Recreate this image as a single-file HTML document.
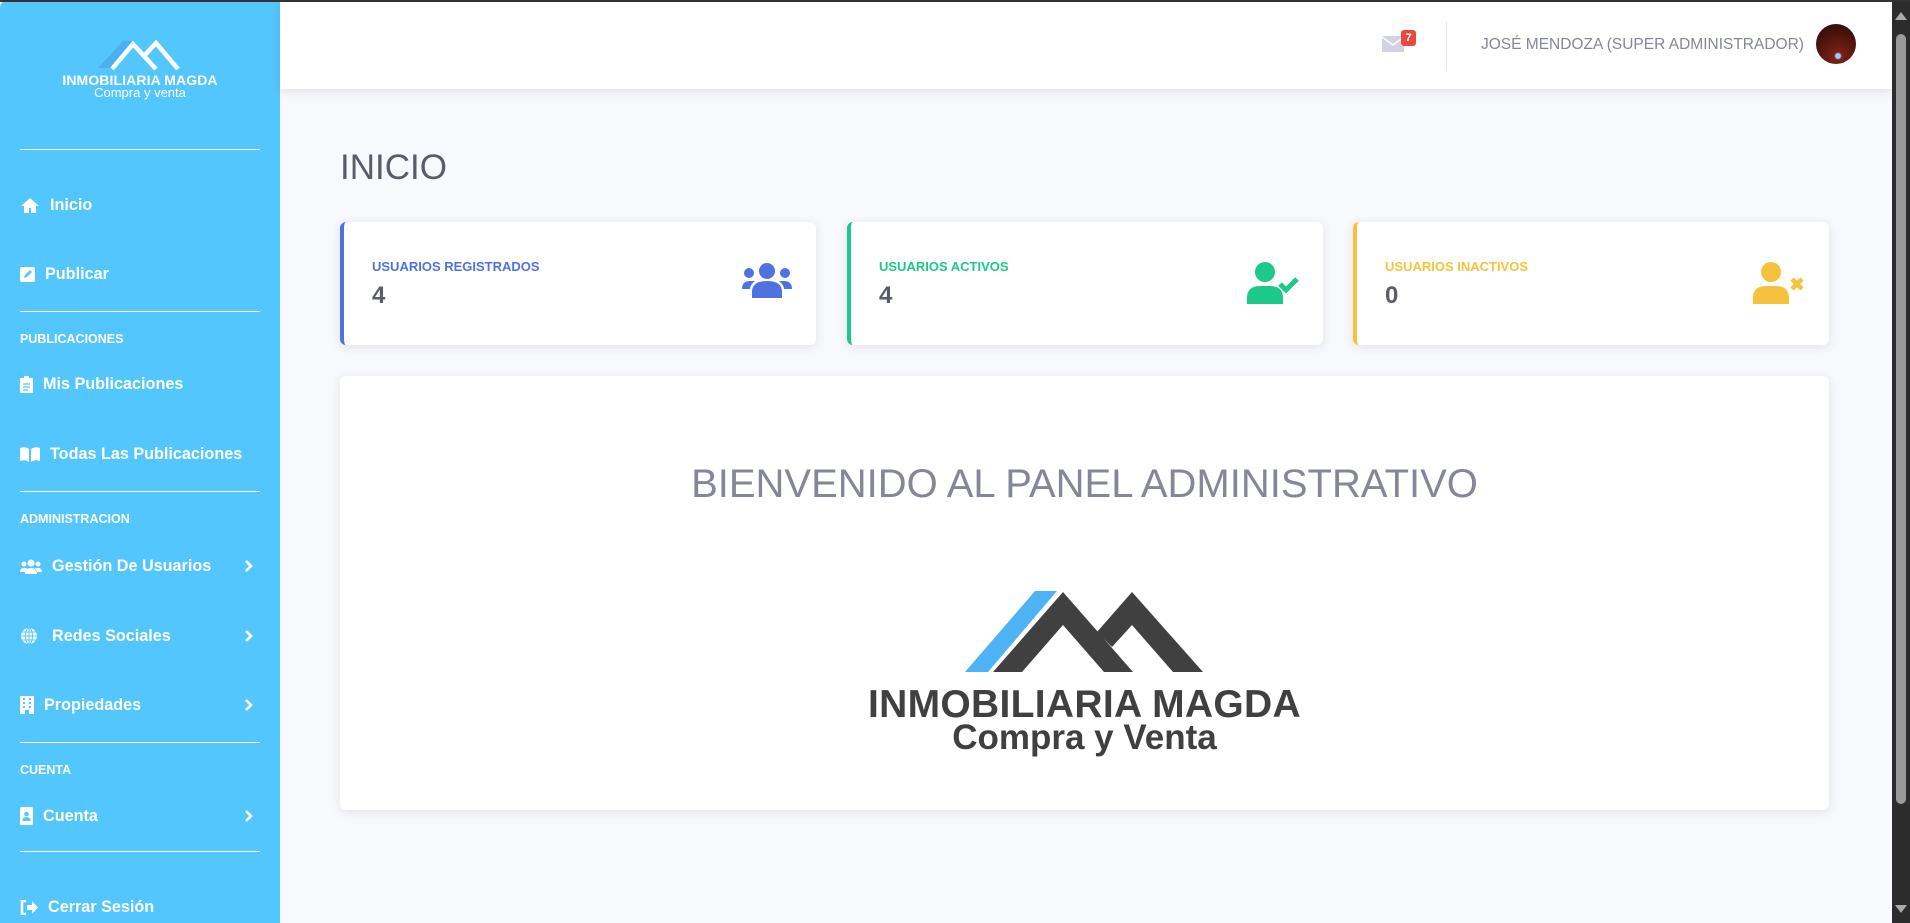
<!DOCTYPE html>
<html><head><meta charset="utf-8"><style>
*{margin:0;padding:0;box-sizing:border-box}
body{width:1910px;height:923px;overflow:hidden;background:#f8f9fc;font-family:"Liberation Sans",sans-serif;position:relative}
.a{position:absolute}
#sb{left:0;top:0;width:280px;height:923px;background:#54c6fe;border-top-left-radius:8px}
.hr{position:absolute;left:20px;width:240px;height:1px;background:#fff}
.mi{position:absolute;left:20px;color:#fff;font-weight:bold;font-size:16.2px;display:flex;align-items:center;height:24px;width:240px}
.mi svg{margin-right:10px;flex:none}
.mi .ch{position:absolute;right:-4px;top:0}
.sec{position:absolute;left:20px;color:#fff;font-weight:bold;font-size:12.5px}
.card{position:absolute;top:222px;height:123px;width:476px;background:#fff;border-radius:6px;box-shadow:0 2px 10px rgba(58,59,69,.12)}
.card .lb{position:absolute;left:28px;top:37px;font-size:13px;font-weight:bold}
.card .n{position:absolute;left:28px;top:60px;font-size:24px;font-weight:bold;color:#5a5c69}
.card svg{position:absolute;right:24px;top:40px}
</style></head><body>
<div class="a" style="left:0;top:0;width:1910px;height:2px;background:#333;z-index:5"></div>
<div id="sb" class="a">
 <svg class="a" style="left:98px;top:40px" width="84" height="30" viewBox="0 0 84 30"><polygon points="0,28 12,28 34,1 25,1" fill="#4bb0f0"/><polyline points="14,29 35,4 58,29" fill="none" stroke="#fff" stroke-width="4.5"/><polyline points="47,15 58,3 80,29" fill="none" stroke="#fff" stroke-width="4.5"/></svg>
 <div class="a" style="left:0;width:280px;top:72px;text-align:center;color:#fff;font-size:14px;font-weight:bold;letter-spacing:.1px">INMOBILIARIA MAGDA</div>
 <div class="a" style="left:0;width:280px;top:85px;text-align:center;color:#fff;font-size:13px">Compra y venta</div>
 <div class="hr" style="top:149px"></div>
 <div class="mi" style="top:193px"><svg width="20" height="16" viewBox="0 0 20 16"><path d="M10 1 1 9h3v7h5v-5h2v5h5V9h3z" fill="#fff"/></svg>Inicio</div>
 <div class="mi" style="top:262px"><svg width="15" height="15" viewBox="0 0 15 15"><rect width="15" height="15" rx="2" fill="#fff"/><path d="M4 11l1-3 5-5 2 2-5 5z" fill="#54c6fe"/></svg>Publicar</div>
 <div class="hr" style="top:311px"></div>
 <div class="sec" style="top:332px">PUBLICACIONES</div>
 <div class="mi" style="top:372px"><svg width="13" height="17" viewBox="0 0 13 17"><rect y="2" width="13" height="15" rx="1" fill="#fff"/><rect x="4" width="5" height="4" fill="#fff"/><path d="M3 8h7M3 11h7M3 14h5" stroke="#54c6fe" stroke-width="1.2"/></svg>Mis Publicaciones</div>
 <div class="mi" style="top:442px"><svg width="20" height="15" viewBox="0 0 20 15"><path d="M0 1q5-2 9 1v13q-4-3-9-1zM20 1q-5-2-9 1v13q4-3 9-1z" fill="#fff"/></svg>Todas Las Publicaciones</div>
 <div class="hr" style="top:491px"></div>
 <div class="sec" style="top:512px">ADMINISTRACION</div>
 <div class="mi" style="top:554px"><svg width="22" height="15" viewBox="0 0 22 15"><circle cx="11" cy="4" r="3.5" fill="#fff"/><circle cx="4" cy="5" r="2.5" fill="#fff"/><circle cx="18" cy="5" r="2.5" fill="#fff"/><path d="M5 15q0-6 6-6t6 6zM0 13q0-4 4-4t3 1l-1 3zM22 13q0-4-4-4t-3 1l1 3z" fill="#fff"/></svg>Gestión De Usuarios<svg class="ch" width="10" height="24" viewBox="0 0 10 24"><path d="M2 7l5 5-5 5" fill="none" stroke="#fff" stroke-width="2.6"/></svg></div>
 <div class="mi" style="top:624px"><svg width="18" height="18" viewBox="0 0 18 18" style="margin-right:14px"><circle cx="9" cy="9" r="8" fill="#fff"/><path d="M1 9h16M9 1v16M2 5h14M2 13h14" stroke="#54c6fe" stroke-width="1"/><ellipse cx="9" cy="9" rx="3.5" ry="8" fill="none" stroke="#54c6fe" stroke-width="1"/></svg>Redes Sociales<svg class="ch" width="10" height="24" viewBox="0 0 10 24"><path d="M2 7l5 5-5 5" fill="none" stroke="#fff" stroke-width="2.6"/></svg></div>
 <div class="mi" style="top:693px"><svg width="14" height="18" viewBox="0 0 14 18"><rect width="14" height="18" fill="#fff"/><path d="M3 3h2M9 3h2M3 7h2M9 7h2M3 11h2M9 11h2" stroke="#54c6fe" stroke-width="2"/><rect x="5" y="14" width="4" height="4" fill="#54c6fe"/></svg>Propiedades<svg class="ch" width="10" height="24" viewBox="0 0 10 24"><path d="M2 7l5 5-5 5" fill="none" stroke="#fff" stroke-width="2.6"/></svg></div>
 <div class="hr" style="top:742px"></div>
 <div class="sec" style="top:763px">CUENTA</div>
 <div class="mi" style="top:804px"><svg width="13" height="18" viewBox="0 0 13 18"><rect width="13" height="18" rx="1.5" fill="#fff"/><circle cx="6.5" cy="7" r="2.3" fill="#54c6fe"/><path d="M2.5 14q0-4 4-4t4 4z" fill="#54c6fe"/></svg>Cuenta<svg class="ch" width="10" height="24" viewBox="0 0 10 24"><path d="M2 7l5 5-5 5" fill="none" stroke="#fff" stroke-width="2.6"/></svg></div>
 <div class="hr" style="top:851px"></div>
 <div class="mi" style="top:895px"><svg width="18" height="15" viewBox="0 0 18 15"><path d="M6 1H2v13h4" fill="none" stroke="#fff" stroke-width="2.5"/><path d="M7 5h5V1l6 6.5-6 6.5v-4H7z" fill="#fff"/></svg>Cerrar Sesión</div>
</div>
<div class="a" style="left:280px;top:2px;width:1612px;height:87px;background:#fff;box-shadow:0 3px 10px rgba(58,59,69,.12)">
 <svg class="a" style="left:1102px;top:34px" width="22" height="16" viewBox="0 0 22 16"><rect width="22" height="16" rx="1" fill="#d1d3e2"/><path d="M0 1l11 8 11-8" fill="none" stroke="#fff" stroke-width="1.5"/></svg>
 <div class="a" style="left:1121px;top:28px;width:15px;height:16px;background:#e74a3b;border-radius:3px;color:#fff;font-size:11px;font-weight:bold;text-align:center;line-height:16px">7</div>
 <div class="a" style="left:1166px;top:20px;width:1px;height:48px;background:#e3e6f0"></div>
 <div class="a" style="left:1201px;top:34px;color:#858796;font-size:15.5px">JOSÉ MENDOZA (SUPER ADMINISTRADOR)</div>
 <div class="a" style="left:1536px;top:22px;width:40px;height:40px;border-radius:50%;background:radial-gradient(circle at 55% 80%,#8fd0ff 0 6%,#7a2015 10%,#4a120c 60%,#2a0a08)"></div>
</div>
<div class="a" style="left:1892px;top:2px;width:18px;height:921px;background:#2c2c2c"></div>
<div class="a" style="left:1896px;top:34px;width:10px;height:770px;background:#9a9a9a;border-radius:5px"></div>
<div class="a" style="left:1895px;top:12px;width:0;height:0;border-left:6px solid transparent;border-right:6px solid transparent;border-bottom:8px solid #aaa"></div>
<div class="a" style="left:1895px;top:905px;width:0;height:0;border-left:6px solid transparent;border-right:6px solid transparent;border-top:8px solid #aaa"></div>
<div class="a" style="left:340px;top:148px;font-size:35px;color:#5a5c69">INICIO</div>
<div class="card" style="left:340px;border-left:4px solid #4e73df"><div class="lb" style="color:#4e73df">USUARIOS REGISTRADOS</div><div class="n">4</div>
<svg width="50" height="36" viewBox="0 0 50 36"><circle cx="25" cy="9" r="8" fill="#4e73df"/><circle cx="7" cy="11" r="5" fill="#4e73df"/><circle cx="43" cy="11" r="5" fill="#4e73df"/><path d="M10 36v-6q0-11 15-11t15 11v6z" fill="#4e73df"/><path d="M0 27q0-8 8-8h5q-5 4-5 8z M50 27q0-8-8-8h-5q5 4 5 8z" fill="#4e73df"/></svg></div>
<div class="card" style="left:847px;border-left:4px solid #1cc88a"><div class="lb" style="color:#1cc88a">USUARIOS ACTIVOS</div><div class="n">4</div>
<svg width="52" height="42" viewBox="0 0 52 42"><circle cx="18" cy="10" r="10" fill="#1cc88a"/><path d="M0 42v-6q0-12 13-12h10q13 0 13 12v6z" fill="#1cc88a"/><path d="M33 22l6 6 11-11" fill="none" stroke="#1cc88a" stroke-width="5"/></svg></div>
<div class="card" style="left:1353px;border-left:4px solid #f6c23e"><div class="lb" style="color:#f6c23e">USUARIOS INACTIVOS</div><div class="n">0</div>
<svg width="52" height="42" viewBox="0 0 52 42"><circle cx="18" cy="10" r="10" fill="#f6c23e"/><path d="M0 42v-6q0-12 13-12h10q13 0 13 12v6z" fill="#f6c23e"/><path d="M39 17l10 10M49 17l-10 10" stroke="#f6c23e" stroke-width="4.5"/></svg></div>
<div class="a" style="left:340px;top:376px;width:1489px;height:434px;background:#fff;border-radius:6px;box-shadow:0 2px 10px rgba(58,59,69,.12)">
 <div class="a" style="left:0;width:1489px;top:86px;text-align:center;font-size:40px;color:#858796">BIENVENIDO AL PANEL ADMINISTRATIVO</div>
 <svg class="a" style="left:624px;top:215px" width="240" height="82" viewBox="0 0 240 82">
  <polygon points="1,81 24,81 93,0 71,0" fill="#4db3f4"/>
  <polygon points="29,81 99,1 169,81 140,81 99,34 58,81" fill="#404040"/>
  <polygon points="133,41 168,1 239,81 209,81 168,34 148,56" fill="#404040"/>
 </svg>
 <div class="a" style="left:0;width:1489px;top:307px;text-align:center;font-size:39px;font-weight:bold;color:#404040;letter-spacing:.3px">INMOBILIARIA MAGDA</div>
 <div class="a" style="left:0;width:1489px;top:342px;text-align:center;font-size:35px;font-weight:bold;color:#404040">Compra y Venta</div>
</div>
</body></html>
